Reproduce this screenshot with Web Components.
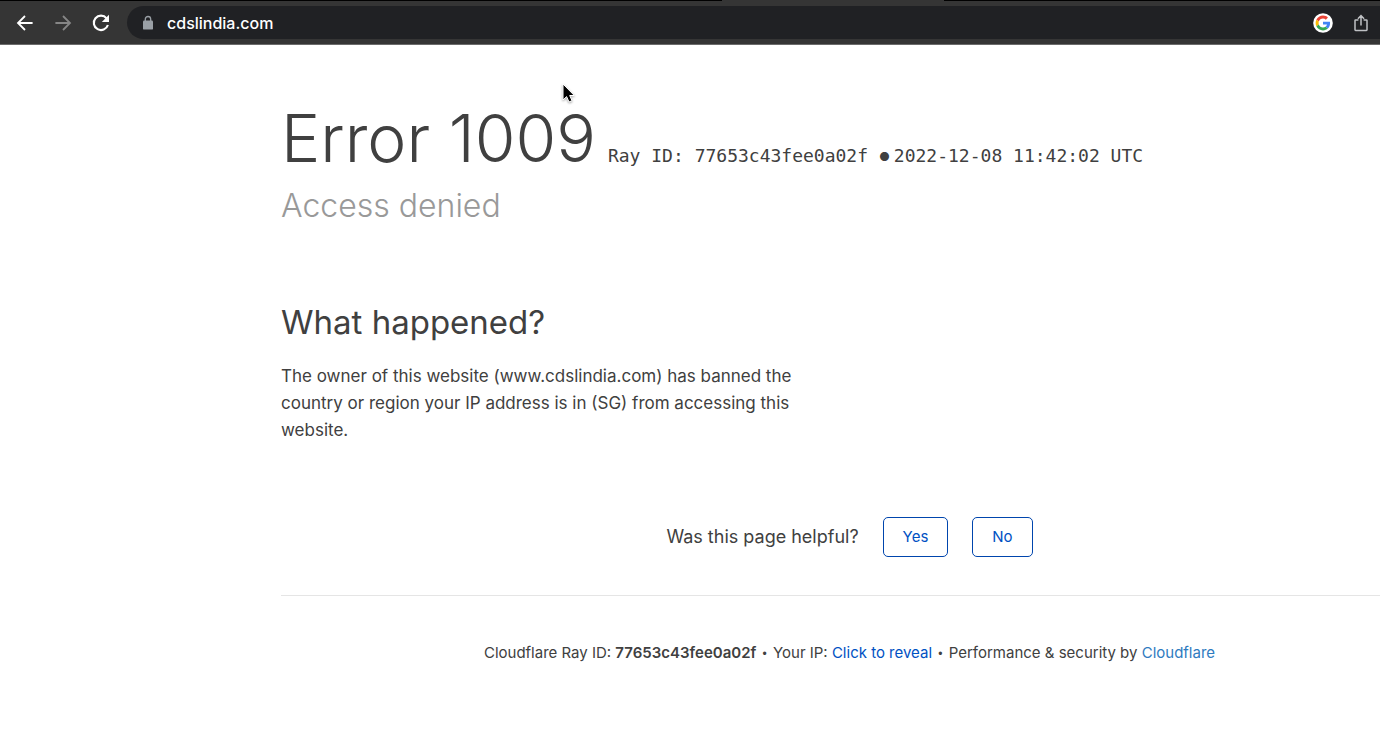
<!DOCTYPE html>
<html lang="en">
<head>
<meta charset="utf-8">
<title>Access denied</title>
<style>
  body { margin: 0; background: #fff; color: #404040; font-family: Inter, "Liberation Sans", sans-serif; overflow-x: hidden; }
</style>
</head>
<body>
<browser-bar address="cdslindia.com"></browser-bar>
<error-page>
  <error-heading slot="header" code="1009" ray="77653c43fee0a02f" time="2022-12-08 11:42:02 UTC">Access denied</error-heading>
  <error-reason heading="What happened?">The owner of this website (www.cdslindia.com) has banned the country or region your IP address is in (SG) from accessing this website.</error-reason>
  <page-feedback>Was this page helpful?</page-feedback>
  <page-footer slot="footer" ray="77653c43fee0a02f"></page-footer>
</error-page>
<mouse-pointer></mouse-pointer>
<script>
const define = (name, markup, setup) => customElements.define(name, class extends HTMLElement {
  connectedCallback() {
    if (this.shadowRoot) return;
    const root = this.attachShadow({ mode: 'open' });
    const template = document.createElement('template');
    template.innerHTML = markup;
    root.append(template.content.cloneNode(true));
    root.querySelectorAll('[data-attr]').forEach(n => {
      n.textContent = this.getAttribute(n.dataset.attr);
    });
    if (setup) setup(this, root);
  }
});

define('browser-bar', `
<style>
  :host { display: block; background: #353535; border-bottom: 1px solid #6b6b6b; }
  .tabs { display: flex; height: 1px; }
  .tabs i { background: #000; flex: 722 1 0; }
  .tabs i:nth-child(2) { background: #353535; flex: 222 1 0; }
  .tabs i:last-child { flex: 436 1 0; }
  .bar { display: flex; align-items: center; padding: 5px 0 5px 12px; }
  button { appearance: none; border: 0; background: none; padding: 0; width: 26px; height: 26px; display: grid; place-items: center; }
  nav { display: flex; gap: 12px; margin-right: 13px; }
  .field { flex: 1; display: flex; align-items: center; height: 33px; padding: 0 6px 0 14px; border-radius: 17px 0 0 17px; background: #202124; }
  input { flex: 1; min-width: 0; border: 0; padding: 0; margin-left: 12px; background: none; color: #fff; font: 500 16px/22px Inter, "Liberation Sans", sans-serif; outline: 0; }
  .field button + button { margin-left: 12px; }
  svg { display: block; }
</style>
<div class="tabs"><i></i><i></i><i></i></div>
<div class="bar">
  <nav aria-label="History">
    <button aria-label="Back"><svg width="18" height="18" viewBox="0 0 18 18" fill="none" stroke="#fff" stroke-width="1.8"><path d="M16.6 9H2.4M9 2 2 9l7 7"/></svg></button>
    <button aria-label="Forward"><svg width="18" height="18" viewBox="0 0 18 18" fill="none" stroke="#868686" stroke-width="1.8"><path d="M1.4 9h14.2M9 2l7 7-7 7"/></svg></button>
    <button aria-label="Reload"><svg width="18" height="18" viewBox="0 0 18 18"><path d="M14.6 4.3A7.2 7.2 0 1 0 15.9 11" fill="none" stroke="#fff" stroke-width="2.1"/><path d="M17 .8V8H9.8Z" fill="#fff"/></svg></button>
  </nav>
  <div class="field">
    <svg width="14" height="16" viewBox="0 0 14 16"><rect x="2" y="5.6" width="10" height="9" rx="1.2" fill="#9aa0a6"/><path d="M4.3 7V4.2a2.7 2.7 0 0 1 5.4 0V7" fill="none" stroke="#9aa0a6" stroke-width="1.3"/></svg>
    <input aria-label="Address" spellcheck="false">
    <button aria-label="Search with Google"><svg width="20" height="20" viewBox="0 0 20 20"><circle cx="10" cy="10" r="9.8" fill="#fff"/><g transform="translate(2.6 2.6) scale(.308)"><path fill="#EA4335" d="M24 9.5c3.54 0 6.71 1.22 9.21 3.6l6.85-6.85C35.9 2.38 30.47 0 24 0 14.62 0 6.51 5.38 2.56 13.22l7.98 6.19C12.43 13.72 17.74 9.5 24 9.5z"/><path fill="#4285F4" d="M46.98 24.55c0-1.57-.15-3.09-.38-4.55H24v9.02h12.94c-.58 2.96-2.26 5.48-4.78 7.18l7.73 6c4.51-4.18 7.09-10.36 7.09-17.65z"/><path fill="#FBBC05" d="M10.53 28.59c-.48-1.45-.76-2.99-.76-4.59s.27-3.14.76-4.59l-7.98-6.19C.92 16.46 0 20.12 0 24s.92 7.54 2.56 10.78l7.97-6.19z"/><path fill="#34A853" d="M24 48c6.48 0 11.93-2.13 15.89-5.81l-7.73-6c-2.15 1.45-4.92 2.3-8.16 2.3-6.26 0-11.57-4.22-13.47-9.91l-7.98 6.19C6.51 42.62 14.62 48 24 48z"/></g></svg></button>
    <button aria-label="Share"><svg width="16" height="18" viewBox="0 0 16 18" fill="none" stroke="#bfc1c4" stroke-width="1.5"><path d="M5.4 6H2.6Q2 6 2 6.6v9.2q0 .6.6.6h10.8q.6 0 .6-.6V6.600q0-.6-.6-.6h-2.800M8 11.600V1.600M4.900 4.700 8 1.600l3.100 3.100"/></svg></button>
  </div>
</div>`, (host, root) => { root.querySelector('input').value = host.getAttribute('address'); });

define('error-page', `
<style>
  :host { display: block; margin: 0 -38px 0 281px; }
  main { padding: 70px 0 38px; border-bottom: 1px solid #e5e5e5; }
</style>
<slot name="header"></slot>
<main><slot></slot></main>
<slot name="footer"></slot>`);

define('error-heading', `
<style>
  :host { display: block; padding-top: 57px; }
  h1 { margin: 0; display: flex; flex-wrap: wrap; align-items: baseline; gap: 0 12px; font-weight: 300; font-size: 66px; line-height: 72px; }
  .ray { font: 18px/24px "DejaVu Sans Mono", monospace; white-space: pre; }
  .dot { font-family: Inter, sans-serif; font-size: 12px; vertical-align: 1px; margin-right: 4px; }
  h2 { margin: 9px 0 0; font-weight: 300; font-size: 32px; line-height: 46px; color: #999; }
</style>
<h1><span>Error <span data-attr="code"></span></span><span class="ray">Ray ID: <span data-attr="ray"></span> <span class="dot">●</span><span data-attr="time"></span></span></h1>
<h2><slot></slot></h2>`);

define('error-reason', `
<style>
  :host { display: block; width: 50%; box-sizing: border-box; padding-right: 32px; }
  h2 { margin: 0 0 18px; font-weight: 400; font-size: 33px; line-height: 46px; }
  p { margin: 0; font-size: 17px; line-height: 27px; }
</style>
<h2 data-attr="heading"></h2>
<p><slot></slot></p>`);

define('page-feedback', `
<style>
  :host { display: flex; justify-content: center; align-items: center; gap: 24px; margin-top: 73px; font-size: 18px; line-height: 26px; }
  button { appearance: none; background: #fff; border: 1px solid #0045ad; border-radius: 5px; height: 40px; padding: 0 19px; color: #0051c3; font: 15px/20px Inter, "Liberation Sans", sans-serif; }
</style>
<span><slot></slot></span><button>Yes</button><button>No</button>`);

define('page-footer', `
<style>
  :host { display: block; padding: 46px 0; text-align: center; font-size: 15px; line-height: 22px; }
  b { font-weight: 600; }
  i { font: 12px/22px "Liberation Sans", sans-serif; margin: 0 2px; }
  a { color: #2f7bbf; text-decoration: none; }
  button { appearance: none; border: 0; background: none; padding: 0; font: inherit; color: #0051c3; }
</style>
<footer>Cloudflare Ray ID: <b data-attr="ray"></b> <i>•</i> Your IP: <button>Click to reveal</button> <i>•</i> Performance &amp; security by <a href="#">Cloudflare</a></footer>`);

define('mouse-pointer', `
<style>
  :host { position: absolute; left: 560px; top: 82px; pointer-events: none; }
  svg { display: block; filter: drop-shadow(0 1px 1px rgba(0,0,0,.35)); }
</style>
<svg width="16" height="22" viewBox="0 0 16 22"><path d="M3 2v16l3.6-3.4L9 20l3-1.3-2.3-5.2h4.6Z" fill="#000" stroke="#fff" stroke-width="1"/></svg>`);
</script>
</body>
</html>
